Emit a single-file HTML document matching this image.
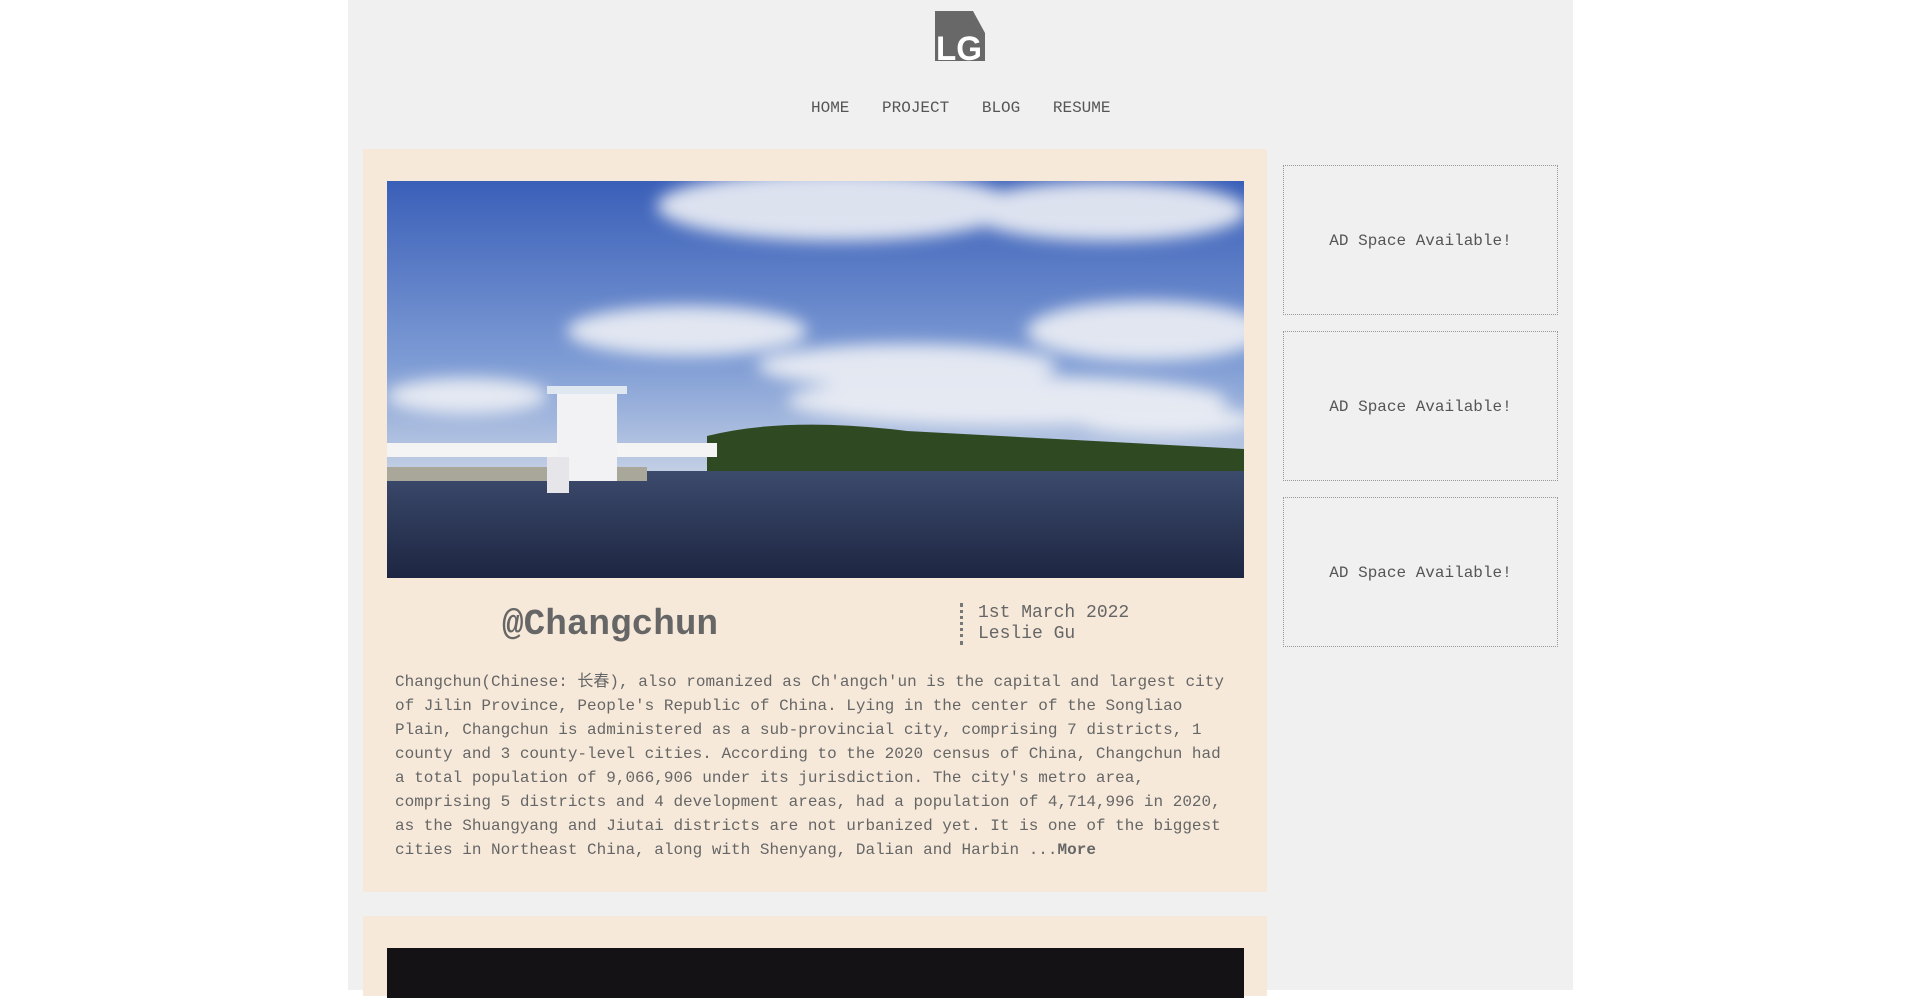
<!DOCTYPE html>
<html><head><meta charset="utf-8"><style>
*{margin:0;padding:0;box-sizing:border-box}
body{width:1919px;height:990px;overflow:hidden;background:#fff;font-family:"Liberation Mono","Noto Sans CJK SC",monospace;color:#555}
.wrap{position:absolute;left:348px;top:0;width:1225px;height:990px;background:#f0f0f0}
.logo{position:absolute;left:935px;top:11px;width:50px;height:50px}
.nav{position:absolute;top:99px;left:811px;font-size:16px;color:#555;white-space:nowrap;word-spacing:0}
.nav span{margin-right:23px}
.card{position:absolute;left:363px;width:904px;background:#f6e9da}
.img{position:absolute;left:387px;width:857px}
.title{position:absolute;left:502px;top:603px;font-size:36px;font-weight:bold;color:#666;line-height:44px}
.dots{position:absolute;left:960px;top:603px;height:42px;border-left:3px dotted #777}
.meta{position:absolute;left:978px;top:603px;font-size:18px;line-height:21px;color:#666}
.body{position:absolute;left:395px;top:670px;width:832px;font-size:16px;line-height:24px;color:#666}
.ad{position:absolute;left:1283px;width:275px;height:150px;border:1px dotted #999;font-size:16px;color:#555;display:flex;align-items:center;justify-content:center;padding-top:2px}
</style></head><body>
<div class="wrap"></div>
<svg class="logo" viewBox="0 0 50 50"><path d="M0 0H38L50 22V50H0Z" fill="#686868"/><text x="1" y="49" font-family="Liberation Sans,sans-serif" font-size="34" fill="#fff" font-weight="bold" textLength="46" lengthAdjust="spacingAndGlyphs">LG</text></svg>
<div class="nav"><span>HOME</span> <span>PROJECT</span> <span>BLOG</span> <span>RESUME</span></div>
<div class="card" style="top:149px;height:743px"></div>
<svg class="img" style="top:181px;height:397px" viewBox="0 0 857 397" preserveAspectRatio="none">
<defs><linearGradient id="sk" x1="0" y1="0" x2="0" y2="1"><stop offset="0" stop-color="#3a5fb8"/><stop offset=".6" stop-color="#7d9bd4"/><stop offset="1" stop-color="#c8d3e6"/></linearGradient>
<linearGradient id="wt" x1="0" y1="0" x2="0" y2="1"><stop offset="0" stop-color="#3c4a6c"/><stop offset="1" stop-color="#1d2642"/></linearGradient>
<filter id="bl"><feGaussianBlur stdDeviation="8"/></filter></defs>
<rect width="857" height="300" fill="url(#sk)"/>
<g fill="#eef0f5" filter="url(#bl)" opacity=".9">
<ellipse cx="450" cy="25" rx="180" ry="35"/><ellipse cx="720" cy="30" rx="140" ry="30"/><ellipse cx="300" cy="150" rx="120" ry="25"/><ellipse cx="520" cy="185" rx="150" ry="22"/><ellipse cx="760" cy="150" rx="120" ry="30"/><ellipse cx="620" cy="220" rx="220" ry="25"/><ellipse cx="80" cy="215" rx="80" ry="18"/><ellipse cx="780" cy="240" rx="90" ry="15"/></g>
<path d="M320 255 Q400 235 520 250 L857 268 V300 H320Z" fill="#2f4a22"/>
<rect y="290" width="857" height="107" fill="url(#wt)"/>
<rect y="286" width="260" height="14" fill="#a9a69a"/>
<rect x="0" y="262" width="330" height="14" fill="#f4f4f4"/>
<rect x="170" y="210" width="60" height="90" fill="#f2f2f4"/>
<rect x="160" y="205" width="80" height="8" fill="#dfe7f0"/>
<rect x="160" y="276" width="22" height="36" fill="#e6e6ea"/>
</svg>
<div class="title">@Changchun</div>
<div class="dots"></div>
<div class="meta">1st March 2022<br>Leslie Gu</div>
<div class="body">Changchun(Chinese: 长春), also romanized as Ch'angch'un is the capital and largest city of Jilin Province, People's Republic of China. Lying in the center of the Songliao Plain, Changchun is administered as a sub-provincial city, comprising 7 districts, 1 county and 3 county-level cities. According to the 2020 census of China, Changchun had a total population of 9,066,906 under its jurisdiction. The city's metro area, comprising 5 districts and 4 development areas, had a population of 4,714,996 in 2020, as the Shuangyang and Jiutai districts are not urbanized yet. It is one of the biggest cities in Northeast China, along with Shenyang, Dalian and Harbin ...<b>More</b></div>
<div class="card" style="top:916px;height:80px"></div>
<div class="img" style="top:948px;height:50px;background:#141214"></div>
<div class="ad" style="top:165px">AD Space Available!</div>
<div class="ad" style="top:331px">AD Space Available!</div>
<div class="ad" style="top:497px">AD Space Available!</div>
</body></html>
